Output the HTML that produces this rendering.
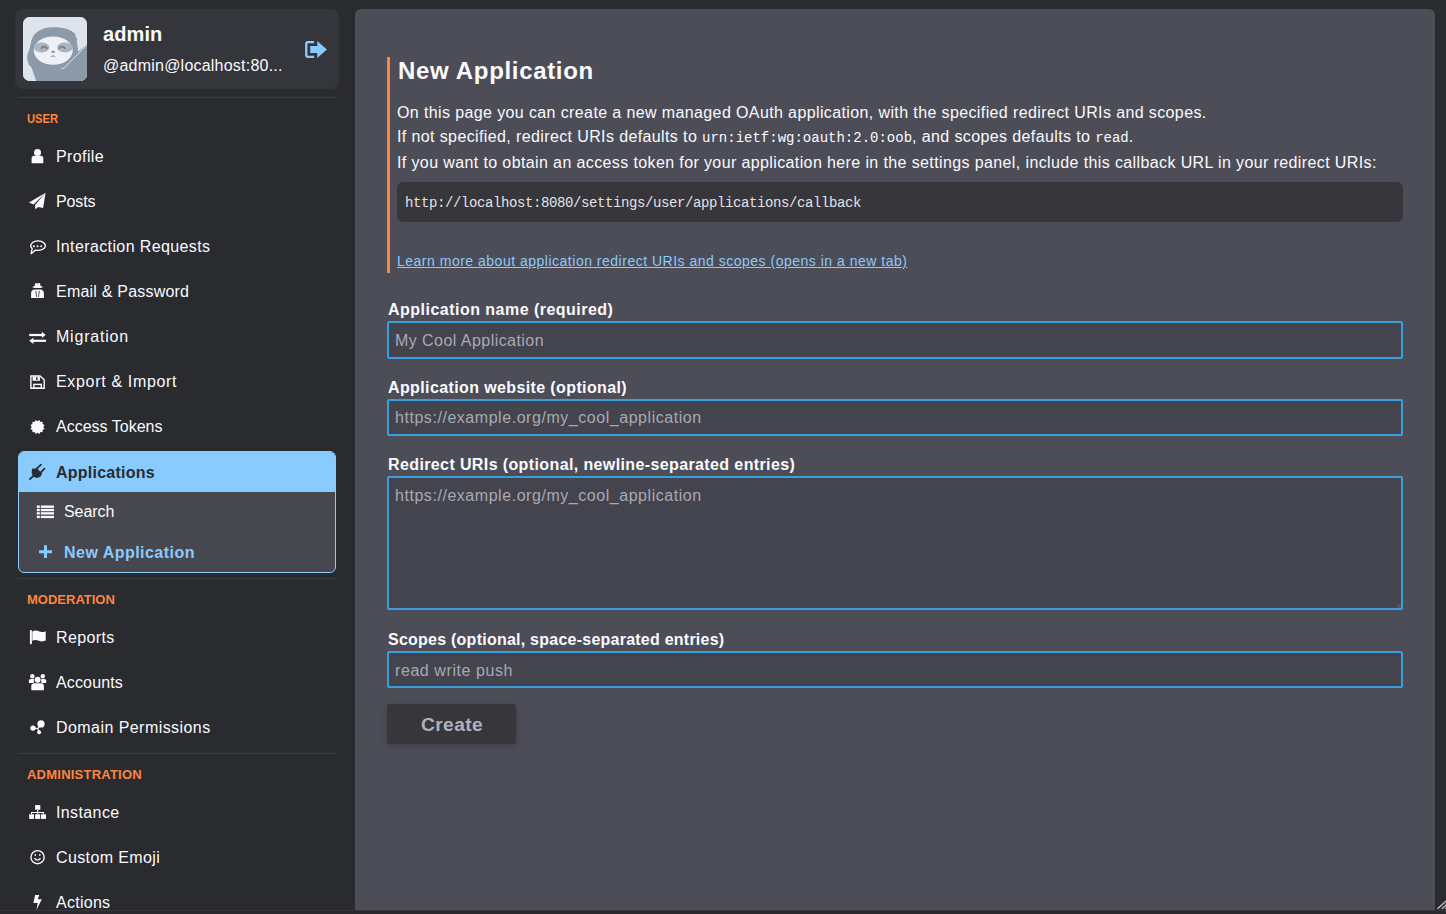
<!DOCTYPE html>
<html>
<head>
<meta charset="utf-8">
<style>
html,body{margin:0;padding:0;}
body{width:1446px;height:914px;overflow:hidden;background:#2a2b2f;position:relative;font-family:"Liberation Sans",sans-serif;color:#fafaff;letter-spacing:0.024em;}
.a{position:absolute;white-space:nowrap;line-height:1;}
.card{position:absolute;left:15px;top:9px;width:324px;height:80px;border-radius:8px;background:#35363b;}
.avatar{position:absolute;left:23px;top:17px;width:64px;height:64px;border-radius:7px;overflow:hidden;background:#dfe3ec;}
.div{position:absolute;left:18px;width:318px;height:1px;background:#3b3c42;}
.sec{font-size:13px;font-weight:bold;color:#ff853e;letter-spacing:0;}
.nav{font-size:16px;}
.ic{position:absolute;}
.panel{position:absolute;left:355px;top:9px;width:1080px;height:920px;border-radius:6px;background:#4d4d57;}
.inp{position:absolute;left:387px;width:1012px;border:2px solid #3a9fde;border-radius:2px;background:#44444e;}
.ph{font-size:16px;color:#a9a9b3;}
.lab{font-size:16px;font-weight:bold;}
</style>
</head>
<body>
<!-- sidebar -->
<div class="card"></div>
<div class="avatar"></div>
<div class="a" style="left:103px;top:24px;font-size:20px;font-weight:bold;letter-spacing:0.1px;">admin</div>
<div class="a" style="left:103px;top:58px;font-size:16px;letter-spacing:0.22px;">@admin@localhost:80...</div>
<div class="div" style="top:97px"></div>
<div class="a sec" style="left:27px;top:112px;transform:scaleX(0.86);transform-origin:0 0;">USER</div>
<div class="a nav" style="left:56px;top:149px;">Profile</div>
<div class="a nav" style="left:56px;top:194px;letter-spacing:-0.14px;">Posts</div>
<div class="a nav" style="left:56px;top:239px;">Interaction Requests</div>
<div class="a nav" style="left:56px;top:284px;letter-spacing:0.21px;">Email &amp; Password</div>
<div class="a nav" style="left:56px;top:329px;letter-spacing:0.79px;">Migration</div>
<div class="a nav" style="left:56px;top:374px;letter-spacing:0.67px;">Export &amp; Import</div>
<div class="a nav" style="left:56px;top:419px;letter-spacing:0.0px;">Access Tokens</div>

<div style="position:absolute;left:18px;top:451px;width:316px;height:120px;border:1px solid #89caff;border-radius:6px;background:#47474f;overflow:hidden;">
  <div style="position:absolute;left:0;top:0;width:316px;height:40px;background:#89caff;"></div>
</div>
<div class="a nav" style="left:56px;top:465px;font-weight:bold;color:#2a2b2f;letter-spacing:0.24px;">Applications</div>
<div class="a nav" style="left:64px;top:504px;letter-spacing:-0.08px;">Search</div>
<div class="a nav" style="left:64px;top:545px;font-weight:bold;color:#89caff;letter-spacing:0.47px;">New Application</div>

<div class="div" style="top:578px"></div>
<div class="a sec" style="left:27px;top:593px;">MODERATION</div>
<div class="a nav" style="left:56px;top:630px;">Reports</div>
<div class="a nav" style="left:56px;top:675px;letter-spacing:0.15px;">Accounts</div>
<div class="a nav" style="left:56px;top:720px;letter-spacing:0.44px;">Domain Permissions</div>
<div class="div" style="top:753px"></div>
<div class="a sec" style="left:27px;top:768px;letter-spacing:0.23px;">ADMINISTRATION</div>
<div class="a nav" style="left:56px;top:805px;">Instance</div>
<div class="a nav" style="left:56px;top:850px;">Custom Emoji</div>
<div class="a nav" style="left:56px;top:895px;letter-spacing:0.27px;">Actions</div>

<!-- icons -->
<svg style="position:absolute;left:0;top:0;" width="340" height="914" viewBox="0 0 340 914">
 <g fill="#fafaff">
  <!-- user -->
  <circle cx="37.5" cy="152.4" r="3.5"/>
  <path d="M31.6,163.2 V158.4 Q31.6,155.8 34.2,155.8 H40.7 Q43.3,155.8 43.3,158.4 V163.2 Z"/>
  <!-- paper plane -->
  <path d="M45.6,192.8 L29.0,202.4 L33.6,204.5 Z"/>
  <path d="M45.6,192.8 L35.1,205 L35.3,209.2 L38.3,206.9 L43.1,207.9 Z"/>
  <!-- user secret -->
  <path d="M34.6,286 L35.2,283.3 Q35.4,282.8 36,283 L37.6,283.6 L39.2,283 Q39.8,282.8 40,283.3 L40.6,286 L43.2,287 L40.8,288 H34.4 L32,287 Z"/>
  <path d="M31.1,297.9 V293.5 Q31.1,289.9 34.2,289.4 H40.8 Q43.9,289.9 43.9,293.5 V297.9 Z"/>
  <path d="M35.8,290.8 L36.6,296.8 M39.3,290.8 L38.5,296.8" stroke="#2a2b2f" stroke-width="0.8"/>
  <!-- exchange -->
  <rect x="29.2" y="333.9" width="13.5" height="2.2"/>
  <path d="M41.8,331.8 L45.7,335 L41.8,338.1 Z"/>
  <rect x="33" y="339.7" width="13" height="2.2"/>
  <path d="M33.4,337.8 L29.2,340.8 L33.4,344.1 Z"/>
  <!-- certificate -->
  <polygon points="39.39,419.95 40.40,421.98 42.66,421.84 42.52,424.10 44.55,425.11 43.30,427.00 44.55,428.89 42.52,429.90 42.66,432.16 40.40,432.02 39.39,434.05 37.50,432.80 35.61,434.05 34.60,432.02 32.34,432.16 32.48,429.90 30.45,428.89 31.70,427.00 30.45,425.11 32.48,424.10 32.34,421.84 34.60,421.98 35.61,419.95 37.50,421.20"/>
  <!-- flag -->
  <rect x="29.9" y="630" width="2" height="14.2" rx="0.8"/>
  <path d="M32.3,631.6 Q35.5,629.8 38.8,631.3 Q42.2,632.9 45.7,631.2 V640.6 Q42.2,642.2 38.8,640.7 Q35.5,639.2 32.3,640.8 Z"/>
  <!-- users -->
  <circle cx="32.3" cy="676.3" r="2.2"/>
  <circle cx="42.8" cy="676.3" r="2.2"/>
  <circle cx="37.6" cy="679.7" r="3.0"/>
  <path d="M28.9,683.1 V680.6 Q28.9,678.9 30.6,678.9 H33.9 L33.9,683.1 Z"/>
  <path d="M41.3,683.1 V678.9 H44.5 Q46.2,678.9 46.2,680.6 V683.1 Z"/>
  <path d="M31.3,690.2 V686 Q31.3,683.2 34.1,683.2 H41.1 Q43.9,683.2 43.9,686 V690.2 Z"/>
  <!-- domain -->
  <circle cx="41" cy="723.9" r="3.6"/>
  <circle cx="33" cy="728.1" r="2.7"/>
  <circle cx="39.1" cy="732.3" r="2"/>
  <!-- sitemap -->
  <rect x="35.1" y="805.1" width="5.2" height="4.6"/>
  <rect x="29.2" y="814.3" width="4.8" height="4.6"/>
  <rect x="35.1" y="814.3" width="5.1" height="4.6"/>
  <rect x="41" y="814.3" width="5" height="4.6"/>
  <!-- bolt -->
  <path d="M35.1,894.9 H39.3 L37.7,899.2 H41.8 L36.4,910 L37.7,903 H33.4 Z"/>
 </g>
 <g fill="none" stroke="#fafaff">
  <!-- comment -->
  <path d="M35.6,250.1 A7.3,4.7 0 1 0 32.2,248.5 L31.1,253.7 Z" stroke-width="1.3" stroke-linejoin="round"/>
  <!-- floppy -->
  <path d="M30.9,376 H40 L44.2,379.8 V388.2 H30.9 Z" stroke-width="1.4"/>
  <rect x="33.8" y="384.4" width="7.5" height="3.8" stroke-width="1.4"/>
  <!-- domain lines -->
  <path d="M33,728.1 L37.8,728.6 L41,723.9 M37.8,728.6 L39.1,732.3" stroke-width="1.2"/>
  <!-- sitemap lines -->
  <path d="M37.7,809.7 V814.3 M31.6,814.3 V812.5 H43.5 V814.3" stroke-width="1.1"/>
  <!-- smile -->
  <circle cx="37.55" cy="857.2" r="6.6" stroke-width="1.4"/>
  <path d="M34.5,858.2 Q37.5,862.2 40.5,858.2" stroke-width="1.3"/>
 </g>
 <g fill="#fafaff">
  <circle cx="33.9" cy="246.2" r="0.95"/>
  <circle cx="37.6" cy="246.2" r="0.95"/>
  <circle cx="41.2" cy="246.2" r="0.95"/>
  <rect x="32.6" y="376.6" width="7.3" height="4.2"/>
  <rect x="34.6" y="854.2" width="1.5" height="1.6"/>
  <rect x="39" y="854.2" width="1.5" height="1.6"/>
 </g>
 <rect x="36.1" y="377.3" width="1.5" height="2.6" fill="#2a2b2f"/>
 <!-- list -->
 <g fill="#fafaff">
  <rect x="36.8" y="505.5" width="3" height="2.4"/>
  <rect x="40.8" y="505.5" width="13.2" height="2.4"/>
  <rect x="36.8" y="508.9" width="3" height="2.3"/>
  <rect x="40.8" y="508.9" width="13.2" height="2.3"/>
  <rect x="36.8" y="512.2" width="3" height="2.3"/>
  <rect x="40.8" y="512.2" width="13.2" height="2.3"/>
  <rect x="36.8" y="515.8" width="3" height="2.3"/>
  <rect x="40.8" y="515.8" width="13.2" height="2.3"/>
 </g>
 <!-- plus -->
 <path d="M45.5,545.3 V558 M39,551.7 H52" stroke="#89caff" stroke-width="3"/>
 <!-- plug -->
 <g fill="#2a2b2f" stroke="#2a2b2f">
  <path d="M32.3,468.7 L37.3,468.7 L41.8,473.4 Q41.6,476.2 38.6,477.4 Q35.3,478.4 33.1,475.9 Q31,473.4 32.3,468.7 Z" stroke-width="0.3"/>
  <path d="M29.9,479.2 L33.4,475.8 M36.6,468.6 L41,464.6 M40.9,472.3 L44.4,468.7" stroke-width="1.8" fill="none" stroke-linecap="round"/>
 </g>
 <!-- logout -->
 <g fill="#89caff">
  <path d="M314.1,40.9 H308 Q305.1,40.9 305.1,43.8 V55.1 Q305.1,58 308,58 H314.1 V55.7 H308.2 Q307.4,55.7 307.4,54.9 V44 Q307.4,43.2 308.2,43.2 H314.1 Z"/>
  <path d="M310.2,46 H317.3 V40.9 L326.9,49.4 L317.3,58 V52.9 H310.2 Z"/>
 </g>
</svg>
<!-- avatar -->
<svg style="position:absolute;left:23px;top:17px;border-radius:7px;" width="64" height="64" viewBox="0 0 64 64">
 <rect width="64" height="64" fill="#dfe3eb"/>
 <path d="M13.2,64 L8.6,50.5 Q5.2,48 4.8,44.5 Q3.6,41 4.4,37.5 Q6.4,33.5 7.6,27.5 C8.6,16 18,10.3 30,10.3 C40,10.3 46,12.3 49.5,14.8 Q53,16.5 52.5,19.5 Q54.8,21.5 53.8,24 Q54.6,29 55.2,34.8 L64,27.3 V64 Z" fill="#8b9aa8"/>
 <ellipse cx="30.2" cy="33.6" rx="19.5" ry="14.2" fill="#edf0f4"/>
 <ellipse cx="18.6" cy="30.5" rx="7.8" ry="5" fill="#abb5c0"/>
 <ellipse cx="41.9" cy="30.5" rx="7.8" ry="5" fill="#abb5c0"/>
 <path d="M18.2,32 A3.1,3.1 0 0 1 24.2,32" stroke="#7a7f86" stroke-width="1.8" fill="none"/>
 <path d="M36.1,32 A3.1,3.1 0 0 1 42.1,32" stroke="#7a7f86" stroke-width="1.8" fill="none"/>
 <ellipse cx="30.1" cy="34.8" rx="1.7" ry="0.95" fill="#7a7f86"/>
 <path d="M28,39.6 Q30.1,38.1 32.2,39.6" stroke="#7a7f86" stroke-width="0.9" fill="none"/>
 <path d="M38.2,52 Q39,50.4 40.4,51.3 Q41,51.5 41.5,50.8 L63.8,28" stroke="#e8ebf0" stroke-width="0.9" fill="none"/>
</svg>
<!-- main -->
<div class="panel"></div>
<div style="position:absolute;left:387px;top:57px;width:3px;height:216px;background:#ff853e;"></div>
<div class="a" style="left:398px;top:59px;font-size:24px;font-weight:bold;letter-spacing:0.028em;">New Application</div>
<div class="a" style="left:397px;top:105px;font-size:16px;">On this page you can create a new managed OAuth application, with the specified redirect URIs and scopes.</div>
<div class="a" style="left:397px;top:129px;font-size:16px;">If not specified, redirect URIs defaults to <span style="font-family:'Liberation Mono',monospace;font-size:14px;letter-spacing:0;">urn:ietf:wg:oauth:2.0:oob</span>, and scopes defaults to <span style="font-family:'Liberation Mono',monospace;font-size:14px;letter-spacing:0;">read</span>.</div>
<div class="a" style="left:397px;top:155px;font-size:16px;">If you want to obtain an access token for your application here in the settings panel, include this callback URL in your redirect URIs:</div>
<div style="position:absolute;left:397px;top:182px;width:1006px;height:40px;border-radius:6px;background:#36363b;"></div>
<div class="a" style="left:405px;top:196px;font-size:14px;font-family:'Liberation Mono',monospace;letter-spacing:-0.4px;color:#e2e2ea;">http://localhost:8080/settings/user/applications/callback</div>
<div class="a" style="left:397px;top:254px;font-size:14px;color:#89caff;text-decoration:underline;letter-spacing:0.036em;">Learn more about application redirect URIs and scopes (opens in a new tab)</div>

<div class="a lab" style="left:388px;top:302px;letter-spacing:0.03em;">Application name (required)</div>
<div class="inp" style="top:321px;height:34px;"></div>
<div class="a ph" style="left:395px;top:333px;letter-spacing:0.028em;">My Cool Application</div>

<div class="a lab" style="left:388px;top:380px;">Application website (optional)</div>
<div class="inp" style="top:399px;height:33px;"></div>
<div class="a ph" style="left:395px;top:410px;letter-spacing:0.034em;">https://example.org/my_cool_application</div>

<div class="a lab" style="left:388px;top:457px;">Redirect URIs (optional, newline-separated entries)</div>
<div class="inp" style="top:476px;height:130px;"></div>
<svg style="position:absolute;left:1394px;top:601px;" width="8" height="8" viewBox="1394 601 8 8"><path d="M1396,607.6 L1400.7,603 V607.6 Z" fill="#5a5a62"/></svg>
<div class="a ph" style="left:395px;top:488px;letter-spacing:0.034em;">https://example.org/my_cool_application</div>

<div class="a lab" style="left:388px;top:632px;letter-spacing:0.015em;">Scopes (optional, space-separated entries)</div>
<div class="inp" style="top:651px;height:33px;"></div>
<div class="a ph" style="left:395px;top:663px;letter-spacing:0.036em;">read write push</div>

<div style="position:absolute;left:387px;top:704px;width:129px;height:40px;border-radius:3px;background:#36363b;box-shadow:0 2px 6px rgba(0,0,0,0.2);"></div>
<div class="a" style="left:421px;top:715px;font-size:19.2px;font-weight:bold;color:#b1b1bd;">Create</div>

<div style="position:absolute;left:0;top:910px;width:1446px;height:4px;background:#2a2a2e;border-top:1px solid #37373c;box-sizing:border-box;"></div>
<svg style="position:absolute;left:1426px;top:894px;" width="20" height="20" viewBox="1426 894 20 20"><path d="M1437.8,908.4 L1446.5,900.6 M1442.2,908.4 L1446.5,904.6 M1445.6,908.4 L1446.5,907.6" stroke="#c4c4c6" stroke-width="1.3" stroke-linecap="round"/></svg>
</body>
</html>
